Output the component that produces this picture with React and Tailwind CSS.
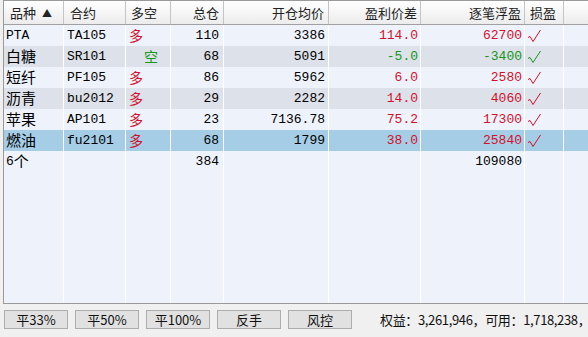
import React from "react";

const RED = "text-[#d2102c]";
const GREEN = "text-[#16961a]";

const rows = [
  { name: "PTA", code: "TA105", side: "多", total: "110", price: "3386", diff: "114.0", pnl: "62700", up: true, bg: "bg-[#eef3fb]" },
  { name: "白糖", code: "SR101", side: "空", total: "68", price: "5091", diff: "-5.0", pnl: "-3400", up: false, bg: "bg-[#dde1e9]" },
  { name: "短纤", code: "PF105", side: "多", total: "86", price: "5962", diff: "6.0", pnl: "2580", up: true, bg: "bg-[#eef3fb]" },
  { name: "沥青", code: "bu2012", side: "多", total: "29", price: "2282", diff: "14.0", pnl: "4060", up: true, bg: "bg-[#dde1e9]" },
  { name: "苹果", code: "AP101", side: "多", total: "23", price: "7136.78", diff: "75.2", pnl: "17300", up: true, bg: "bg-[#eef3fb]" },
  { name: "燃油", code: "fu2101", side: "多", total: "68", price: "1799", diff: "38.0", pnl: "25840", up: true, bg: "bg-[#a5cde5]" },
];

const widths = ["w-[60px]", "w-[62px]", "w-[45px]", "w-[53px]", "w-[105px]", "w-[92px]", "w-[104px]", "w-[39px]"];

const mono = "font-['Liberation_Mono','Noto_Sans_CJK_SC',monospace] text-[13px]";
const cjk = "font-['Noto_Sans_CJK_SC',sans-serif] text-[15px]";

const Check = ({ up }) => (
  <svg width="15" height="14" viewBox="0 0 15 14" className={up ? RED : GREEN}>
    <path d="M1 8.5 L3 7.5 L6 12.5 L13.5 1" fill="none" stroke="currentColor" strokeWidth="1" />
  </svg>
);

const Header = () => {
  const cell = "h-full flex items-center border-r border-[#c4c4c4] shrink-0";
  return (
    <div className="flex h-[24px] border-b border-[#a0a0a0] bg-gradient-to-b from-[#ffffff] to-[#ececec] font-['Noto_Sans_CJK_SC',sans-serif] text-[13px] text-[#222]">
      <div className={`${cell} ${widths[0]} pl-[6px]`}>
        品种<span className="ml-[6px] text-[10px]">▲</span>
      </div>
      <div className={`${cell} ${widths[1]} pl-[6px]`}>合约</div>
      <div className={`${cell} ${widths[2]} pl-[5px]`}>多空</div>
      <div className={`${cell} ${widths[3]} justify-end pr-[4px]`}>总仓</div>
      <div className={`${cell} ${widths[4]} justify-end pr-[4px]`}>开仓均价</div>
      <div className={`${cell} ${widths[5]} justify-end pr-[3px]`}>盈利价差</div>
      <div className={`${cell} ${widths[6]} justify-end pr-[3px]`}>逐笔浮盈</div>
      <div className={`${cell} ${widths[7]} pl-[5px]`}>损盈</div>
      <div className="h-full flex-1" />
    </div>
  );
};

const cell = "h-full flex items-center border-r border-white shrink-0";

const Row = ({ r }) => {
  const color = r.up ? RED : GREEN;
  const isLatin = /^[A-Za-z]/.test(r.name);
  return (
    <div className={`flex h-[21px] ${r.bg} text-black`}>
      <div className={`${cell} ${widths[0]} pl-[2px] ${isLatin ? mono : cjk}`}>{r.name}</div>
      <div className={`${cell} ${widths[1]} pl-[3px] ${mono}`}>{r.code}</div>
      <div
        className={`${cell} ${widths[2]} ${r.side === "空" ? "pl-[18px]" : "pl-[3px]"} ${color} font-['Noto_Sans_CJK_SC',sans-serif] text-[14px]`}
      >
        {r.side}
      </div>
      <div className={`${cell} ${widths[3]} justify-end pr-[4px] ${mono}`}>{r.total}</div>
      <div className={`${cell} ${widths[4]} justify-end pr-[3px] ${mono}`}>{r.price}</div>
      <div className={`${cell} ${widths[5]} justify-end pr-[2px] ${mono} ${color}`}>{r.diff}</div>
      <div className={`${cell} ${widths[6]} justify-end pr-[2px] ${mono} ${color}`}>{r.pnl}</div>
      <div className={`${cell} ${widths[7]} pl-[2px]`}>
        <Check up={r.up} />
      </div>
      <div className="h-full flex-1" />
    </div>
  );
};

const SumRow = () => (
  <div className="flex h-[21px] bg-[#eef3fb] text-black">
    <div className={`${cell} ${widths[0]} pl-[2px] ${mono}`}>
      6<span className="font-['Noto_Sans_CJK_SC',sans-serif] text-[15px]">个</span>
    </div>
    <div className={`${cell} ${widths[1]}`} />
    <div className={`${cell} ${widths[2]}`} />
    <div className={`${cell} ${widths[3]} justify-end pr-[4px] ${mono}`}>384</div>
    <div className={`${cell} ${widths[4]}`} />
    <div className={`${cell} ${widths[5]}`} />
    <div className={`${cell} ${widths[6]} justify-end pr-[2px] ${mono}`}>109080</div>
    <div className={`${cell} ${widths[7]}`} />
    <div className="h-full flex-1" />
  </div>
);

const Filler = () => (
  <div className="flex flex-1 bg-[#eef3fb]">
    {widths.map((w) => (
      <div key={w} className={`h-full shrink-0 border-r border-white ${w}`} />
    ))}
    <div className="h-full flex-1" />
  </div>
);

const buttons = ["平33%", "平50%", "平100%", "反手", "风控"];

export default function App() {
  return (
    <div className="flex h-[337px] w-[588px] flex-col overflow-hidden bg-[#f0f0f0]">
      <div className="ml-[3px] flex h-[304px] shrink-0 flex-col overflow-hidden border-b border-l border-t border-[#9a9a9a] bg-[#eef3fb]">
        <Header />
        {rows.map((r) => (
          <Row key={r.code} r={r} />
        ))}
        <SumRow />
        <Filler />
      </div>
      <div className="flex flex-1 items-start pl-[4px] pt-[6px]">
        <div className="flex shrink-0 gap-[7px]">
          {buttons.map((b) => (
            <button
              key={b}
              className="flex h-[19px] w-[64px] items-center justify-center border border-[#adadad] bg-[#e1e1e1] font-['Noto_Sans_CJK_SC',sans-serif] text-[13px] leading-none text-[#111]"
            >
              {b}
            </button>
          ))}
        </div>
        <div className="ml-[28px] flex h-[19px] min-w-0 items-center whitespace-nowrap font-['Noto_Sans_CJK_SC',sans-serif] text-[13px] tracking-[-0.35px] text-[#111]">
          权益：3,261,946，可用：1,718,238，
        </div>
      </div>
    </div>
  );
}
